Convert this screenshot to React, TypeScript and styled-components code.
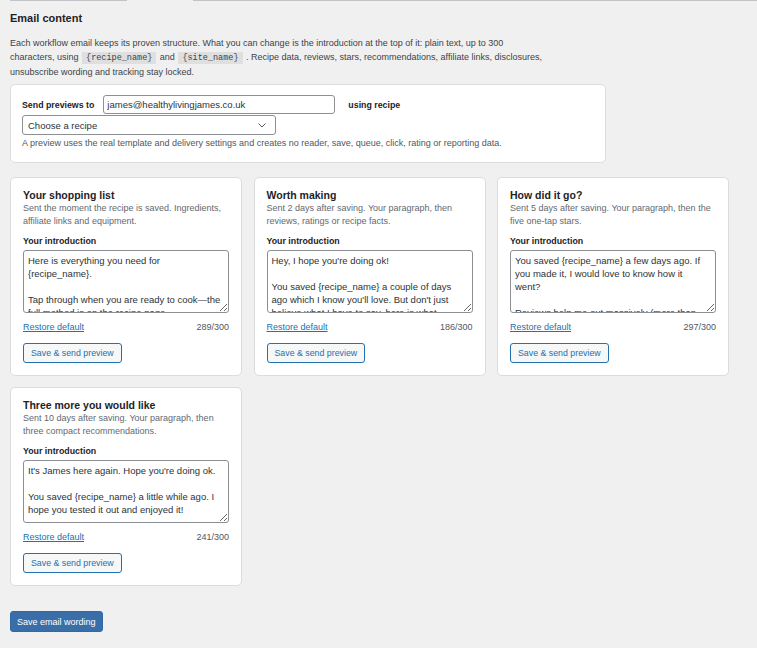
import React from 'react'
import styled, { createGlobalStyle } from 'styled-components'

// email wording settings: preview sender, one card per workflow email, save

type EmailCardType = {
    title: string
    sub: string
    intro: string
    count: number
}

const emails: EmailCardType[] = [
    {
        title: 'Your shopping list',
        sub: 'Sent the moment the recipe is saved. Ingredients, affiliate links and equipment.',
        intro: 'Here is everything you need for {recipe_name}.\n\nTap through when you are ready to cook\u2014the full method is on the recipe page.',
        count: 289,
    },
    {
        title: 'Worth making',
        sub: 'Sent 2 days after saving. Your paragraph, then reviews, ratings or recipe facts.',
        intro: "Hey, I hope you're doing ok!\n\nYou saved {recipe_name} a couple of days ago which I know you'll love. But don't just believe what I have to say, here is what others thought.",
        count: 186,
    },
    {
        title: 'How did it go?',
        sub: 'Sent 5 days after saving. Your paragraph, then the five one-tap stars.',
        intro: 'You saved {recipe_name} a few days ago. If you made it, I would love to know how it went?\n\nReviews help me out massively (more than you might think) and only take a tap.',
        count: 297,
    },
    {
        title: 'Three more you would like',
        sub: 'Sent 10 days after saving. Your paragraph, then three compact recommendations.',
        intro: "It's James here again. Hope you're doing ok.\n\nYou saved {recipe_name} a little while ago. I hope you tested it out and enjoyed it!",
        count: 241,
    },
]

const EmailCard = (props: EmailCardType) => {
  return (
    <Card>
        <CardTitle>{props.title}</CardTitle>
        <CardSub>{props.sub}</CardSub>
        <FieldLabel>Your introduction</FieldLabel>
        <IntroBox defaultValue={props.intro} spellCheck={false}/>
        <CardFoot>
            <RestoreLink href="#">Restore default</RestoreLink>
            <Counter>{props.count}/300</Counter>
        </CardFoot>
        <SecondaryButton type="button">Save &amp; send preview</SecondaryButton>
    </Card>
  )
}

const App = () => {
  return (
    <>
    <GlobalStyle/>
    <Page>
        <TabRule>
            <TabEdge $width="117px"/>
            <ActiveTab/>
            <TabEdge $width="auto"/>
        </TabRule>
        <Heading>Email content</Heading>
        <Intro>
            Each workflow email keeps its proven structure. What you can change is the introduction at the top of it: plain text, up to 300 characters, using <Token>{'{recipe_name}'}</Token> and <Token>{'{site_name}'}</Token> . Recipe data, reviews, stars, recommendations, affiliate links, disclosures, unsubscribe wording and tracking stay locked.
        </Intro>
        <PreviewPanel>
            <PreviewRow>
                <InlineLabel>Send previews to</InlineLabel>
                <EmailInput defaultValue="james@healthylivingjames.co.uk" spellCheck={false}/>
                <InlineLabel $gapLeft>using recipe</InlineLabel>
            </PreviewRow>
            <SelectWrap>
                <RecipeSelect defaultValue="">
                    <option value="">Choose a recipe</option>
                </RecipeSelect>
                <Chevron width="8" height="5" viewBox="0 0 8 5">
                    <polyline points="0.5,0.5 4,4 7.5,0.5" fill="none" stroke="#50575e" strokeWidth="1"/>
                </Chevron>
            </SelectWrap>
            <HelpText>A preview uses the real template and delivery settings and creates no reader, save, queue, click, rating or reporting data.</HelpText>
        </PreviewPanel>
        <CardGrid>
            {emails.map((e) => <EmailCard key={e.title} {...e}/>)}
        </CardGrid>
        <PrimaryButton type="button">Save email wording</PrimaryButton>
    </Page>
    </>
  )
}

export default App

const GlobalStyle = createGlobalStyle`
    html, body {
        margin: 0;
        background: #f0f0f0;
    }
    body {
        font-family: "Liberation Sans", Arial, sans-serif;
        color: #1d2327;
        -webkit-font-smoothing: antialiased;
    }
`
const Page = styled.div`
    min-height: 648px;
    padding: 0 0 16px 10px;
    box-sizing: border-box;
`
const TabRule = styled.div`
    display: flex;
    height: 1px;
`
const TabEdge = styled.div<{ $width: string }>`
    width: ${p => p.$width};
    flex: ${p => (p.$width === 'auto' ? 1 : 'none')};
    border-top: 1px solid #c3c4c7;
`
const ActiveTab = styled.div`
    width: 66px;
`
const Heading = styled.h2`
    margin: 10px 0 0;
    font-size: 11px;
    line-height: 14px;
    font-weight: 700;
    color: #1d2327;
`
const Intro = styled.p`
    margin: 11px 0 0;
    width: 540px;
    font-size: 9px;
    line-height: 14px;
    color: #3c434a;
`
const Token = styled.code`
    font-family: "Liberation Mono", "Courier New", monospace;
    font-size: 8.5px;
    background: rgba(0, 0, 0, 0.07);
    padding: 1px 4px;
    margin: 0 1px;
    color: #3c434a;
`
const PreviewPanel = styled.div`
    margin-top: 5px;
    width: 596px;
    box-sizing: border-box;
    background: #fff;
    border: 1px solid #dcdcde;
    border-radius: 5px;
    padding: 10px 11px 13px;
`
const PreviewRow = styled.div`
    display: flex;
    align-items: center;
    gap: 9px;
`
const InlineLabel = styled.span<{ $gapLeft?: boolean }>`
    font-size: 8.8px;
    font-weight: 700;
    color: #1d2327;
    margin-left: ${p => (p.$gapLeft ? '4px' : '0')};
`
const EmailInput = styled.input`
    width: 232px;
    height: 19px;
    box-sizing: border-box;
    border: 1px solid #8c8f94;
    border-radius: 3px;
    padding: 0 3px;
    font-family: "Liberation Sans", Arial, sans-serif;
    font-size: 9.5px;
    color: #2c3338;
    background: #fff;
    outline: none;
`
const SelectWrap = styled.div`
    position: relative;
    width: 254px;
    margin-top: 1px;
`
const RecipeSelect = styled.select`
    display: block;
    width: 100%;
    height: 20px;
    box-sizing: border-box;
    appearance: none;
    border: 1px solid #8c8f94;
    border-radius: 3px;
    padding: 0 20px 0 5px;
    font-family: "Liberation Sans", Arial, sans-serif;
    font-size: 9.5px;
    color: #2c3338;
    background: #fff;
    outline: none;
`
const Chevron = styled.svg`
    position: absolute;
    right: 10px;
    top: 8px;
    pointer-events: none;
`
const HelpText = styled.p`
    margin: 2px 0 0;
    font-size: 9px;
    line-height: 12px;
    color: #50575e;
`
const CardGrid = styled.div`
    margin-top: 14px;
    display: grid;
    grid-template-columns: repeat(3, 232px);
    column-gap: 11.5px;
    row-gap: 11px;
    align-items: start;
`
const Card = styled.div`
    background: #fff;
    border: 1px solid #dcdcde;
    border-radius: 5px;
    padding: 10px 12px 12px;
`
const CardTitle = styled.h3`
    margin: 0;
    font-size: 10.5px;
    line-height: 14px;
    font-weight: 700;
    color: #1d2327;
`
const CardSub = styled.p`
    margin: 0;
    font-size: 9px;
    line-height: 13px;
    color: #646970;
`
const FieldLabel = styled.div`
    margin-top: 7px;
    font-size: 8.8px;
    line-height: 12px;
    font-weight: 700;
    color: #1d2327;
`
const IntroBox = styled.textarea`
    display: block;
    margin-top: 3px;
    width: 100%;
    height: 63px;
    box-sizing: border-box;
    border: 1px solid #8c8f94;
    border-radius: 3px;
    padding: 3px 6px 3px 4px;
    font-family: "Liberation Sans", Arial, sans-serif;
    font-size: 9.5px;
    line-height: 13px;
    color: #2c3338;
    background: #fff;
    overflow: hidden;
    resize: vertical;
    outline: none;
`
const CardFoot = styled.div`
    margin-top: 8px;
    display: flex;
    justify-content: space-between;
    align-items: center;
    font-size: 9px;
    line-height: 13px;
`
const RestoreLink = styled.a`
    color: #2271b1;
    text-decoration: underline;
`
const Counter = styled.span`
    color: #50575e;
`
const SecondaryButton = styled.button`
    display: block;
    margin-top: 9px;
    height: 20px;
    padding: 0 7px;
    border: 1px solid #2271b1;
    border-radius: 3px;
    background: #f6f7f7;
    color: #2271b1;
    font-family: "Liberation Sans", Arial, sans-serif;
    font-size: 8.8px;
    cursor: pointer;
`
const PrimaryButton = styled.button`
    display: block;
    margin-top: 25px;
    height: 21px;
    padding: 0 6px;
    border: 1px solid #2f6aa6;
    border-radius: 3px;
    background: #3a6ea8;
    color: #fff;
    font-family: "Liberation Sans", Arial, sans-serif;
    font-size: 9px;
    cursor: pointer;
`
